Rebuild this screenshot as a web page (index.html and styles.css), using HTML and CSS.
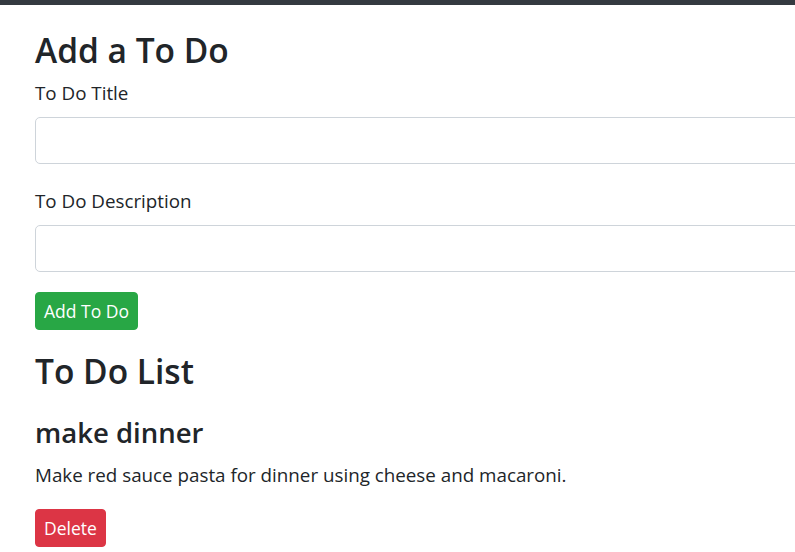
FILE: index.html
```html
<!DOCTYPE html>
<html lang="en">
<head>
<meta charset="utf-8">
<title>To Do</title>
<link rel="stylesheet" href="styles.css">
</head>
<body>
<nav class="topbar"></nav>
<main class="container">
  <h2 class="page-title">Add a To Do</h2>
  <form class="todo-form">
    <div class="form-group">
      <label class="form-label" for="title">To Do Title</label>
      <input class="form-control" id="title" type="text">
    </div>
    <div class="form-group">
      <label class="form-label" for="desc">To Do Description</label>
      <input class="form-control" id="desc" type="text">
    </div>
    <button class="btn btn-success" type="button">Add To Do</button>
  </form>
  <h2 class="page-title list-title">To Do List</h2>
  <div class="todo-item">
    <h3 class="todo-title">make dinner</h3>
    <p class="todo-desc">Make red sauce pasta for dinner using cheese and macaroni.</p>
    <button class="btn btn-danger" type="button">Delete</button>
  </div>
</main>
</body>
</html>
```
FILE: styles.css
```css
html, body {
  margin: 0;
  padding: 0;
  background: #fff;
  overflow: hidden;
}
body {
  font-family: "Open Sans", "Noto Sans", sans-serif;
  color: #212529;
  width: 795px;
  height: 552px;
}
.topbar {
  height: 5px;
  background: #343a40;
}
.container {
  padding: 0 0 0 35px;
}
.page-title {
  font-size: 33.5px;
  font-weight: 600;
  line-height: 1.2;
  margin: 25px 0 11px;
}
.list-title {
  margin: 21px 0 25px;
}
.form-group {
  margin-bottom: 25px;
}
.form-label {
  display: block;
  font-size: 18.8px;
  line-height: 24px;
  margin-bottom: 12px;
}
.form-control {
  display: block;
  box-sizing: border-box;
  width: 1000px;
  height: 47px;
  border: 1px solid #ced4da;
  border-radius: 5px;
  background: #fff;
  font: inherit;
  padding: 6px 12px;
  margin: 0;
}
.form-group:nth-child(2) {
  margin-bottom: 20px;
}
.btn {
  display: inline-block;
  box-sizing: border-box;
  height: 38px;
  padding: 0 8px;
  border: 1px solid transparent;
  border-radius: 4px;
  color: #fff;
  font-family: inherit;
  font-size: 17.5px;
  line-height: 36px;
  cursor: pointer;
}
.btn-success {
  background: #28a745;
  border-color: #28a745;
}
.btn-danger {
  background: #dc3545;
  border-color: #dc3545;
}
.todo-title {
  font-size: 27.5px;
  font-weight: 600;
  line-height: 1.2;
  margin: 0 0 13px;
}
.todo-desc {
  font-size: 18.8px;
  line-height: 27px;
  margin: 0 0 20px;
}
```
